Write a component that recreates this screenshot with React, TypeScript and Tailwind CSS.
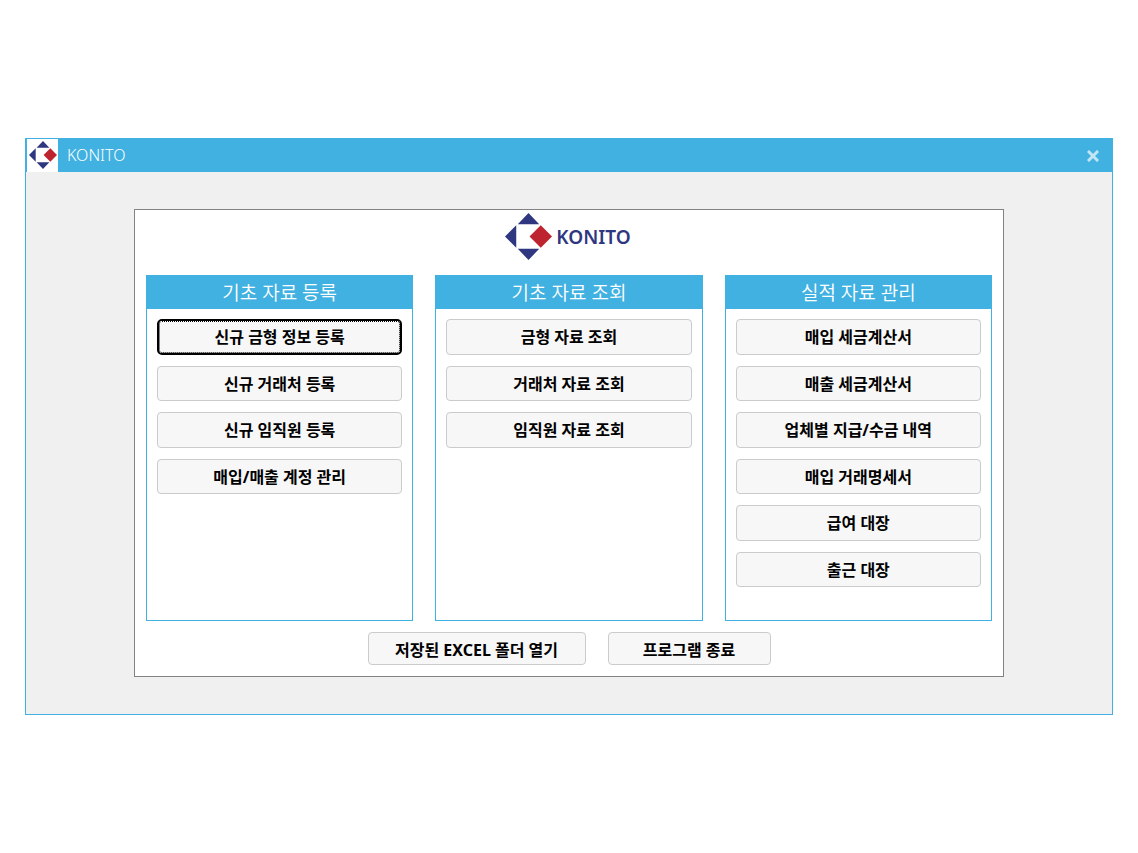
type MenuGroup = { title: string; items: string[] };

const groups: MenuGroup[] = [
  {
    title: "기초 자료 등록",
    items: ["신규 금형 정보 등록", "신규 거래처 등록", "신규 임직원 등록", "매입/매출 계정 관리"],
  },
  {
    title: "기초 자료 조회",
    items: ["금형 자료 조회", "거래처 자료 조회", "임직원 자료 조회"],
  },
  {
    title: "실적 자료 관리",
    items: [
      "매입 세금계산서",
      "매출 세금계산서",
      "업체별 지급/수금 내역",
      "매입 거래명세서",
      "급여 대장",
      "출근 대장",
    ],
  },
];

function LogoMark({ className }: { className: string }) {
  return (
    <svg viewBox="0 0 46 46" className={className} aria-hidden="true">
      <path d="M23 0 33.5 11h-21zM0 23 11 12v22zM23 46 12.5 35h21z" fill="#2f3780" />
      <path d="M35 12 46 23 35 34 24 23z" fill="#bd242f" />
    </svg>
  );
}

function MenuButton({ label, active = false }: { label: string; active?: boolean }) {
  return (
    <button
      type="button"
      className={
        active
          ? "rounded-[5px] border-2 border-black bg-black text-[16px] leading-none font-bold text-black"
          : "rounded-[4px] border border-[#cbcbcb] bg-[#f7f7f7] pt-px text-[16px] leading-none font-bold text-black"
      }
    >
      {active ? (
        <span className="flex h-full items-center justify-center rounded-[2px] border border-dotted border-white bg-[#f7f7f7] bg-clip-padding pt-px">
          {label}
        </span>
      ) : (
        label
      )}
    </button>
  );
}

export default function App() {
  return (
    <div className="flex min-h-screen items-center bg-white px-[25px] font-['Noto_Sans','Noto_Sans_CJK_KR',sans-serif]">
      <main className="w-full border border-[#41b1e1] bg-[#f0f0f0]">
        <header className="flex h-[33px] items-center bg-[#41b1e1] pl-px">
          <div className="flex h-[33px] w-[31px] items-center justify-center bg-white pb-px">
            <LogoMark className="size-7" />
          </div>
          <h1 className="ml-[9px] pb-px text-[16px] leading-6 font-light text-white">KONITO</h1>
          <button
            type="button"
            aria-label="닫기"
            className="mr-[13px] ml-auto flex size-3 items-center justify-center"
          >
            <svg viewBox="0 0 12 12" className="size-3" aria-hidden="true">
              <path d="M2 2l8 8M10 2l-8 8" stroke="#c3e6f5" strokeWidth="3" strokeLinecap="square" />
            </svg>
          </button>
        </header>

        <div className="px-[108px] py-[37px]">
          <section className="border border-[#838383] bg-white px-[11px] pb-[11px]">
            <div className="flex h-[65px] items-center justify-center pt-[2px] pr-[2px] pb-[14px]">
              <LogoMark className="size-[47px]" />
              <span className="ml-1 text-[19px] leading-6 font-semibold text-[#2f3780]">
                KONITO
              </span>
            </div>

            <div className="grid grid-cols-3 gap-[22px]">
              {groups.map((group, column) => (
                <section key={group.title} className="border border-[#41b1e1]">
                  <h2 className="flex h-[33px] items-center justify-center bg-[#41b1e1] pt-[2px] text-[19px] leading-none font-[350] text-white">
                    {group.title}
                  </h2>
                  <div className="px-[10px] pt-[10px] pb-[33px]">
                    <div className="grid h-[268px] grid-rows-6 gap-[11px]">
                      {group.items.map((label, row) => (
                        <MenuButton key={label} label={label} active={column === 0 && row === 0} />
                      ))}
                    </div>
                  </div>
                </section>
              ))}
            </div>

            <div className="mt-[11px] flex justify-center gap-[22px]">
              <button
                type="button"
                className="h-[33px] w-[218px] rounded-[4px] border border-[#cbcbcb] bg-[#f7f7f7] pt-[2px] text-[16px] leading-none font-bold text-black"
              >
                저장된 EXCEL 폴더 열기
              </button>
              <button
                type="button"
                className="h-[33px] w-[163px] rounded-[4px] border border-[#cbcbcb] bg-[#f7f7f7] pt-[2px] text-[16px] leading-none font-bold text-black"
              >
                프로그램 종료
              </button>
            </div>
          </section>
        </div>
      </main>
    </div>
  );
}
